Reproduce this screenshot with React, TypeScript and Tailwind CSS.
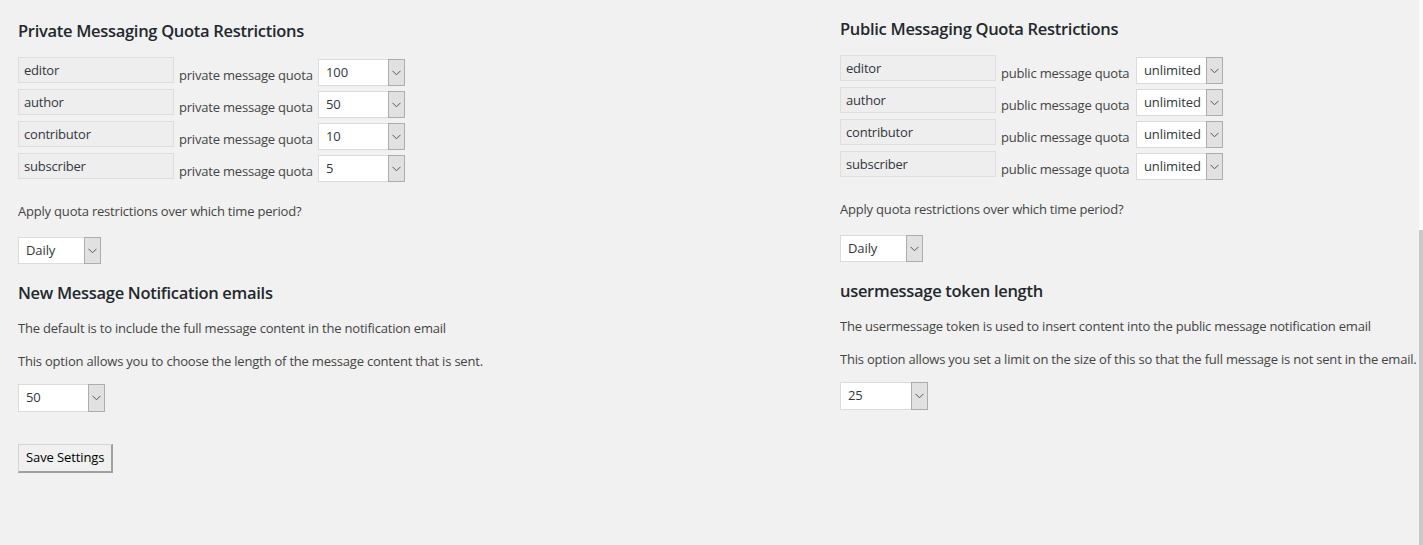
import React from "react";

const ROLES = ["editor", "author", "contributor", "subscriber"];
const PRIVATE_QUOTAS = ["100", "50", "10", "5"];

function Chevron() {
  return (
    <svg width="9" height="6" viewBox="0 0 9 6" fill="none">
      <path d="M0.5 0.8 L4.5 4.8 L8.5 0.8" stroke="#555" strokeWidth="1" />
    </svg>
  );
}

function Select({ value, width, height = "h-[27px]" }: { value: string; width: string; height?: string }) {
  return (
    <div className={`flex ${height} ${width} border border-[#dcdcdc] bg-white`}>
      <div className="flex flex-1 items-center pl-[7px] text-[13px] tracking-[-0.1px] text-[#32373c]">{value}</div>
      <div className="-my-px -mr-px flex w-[17px] items-center justify-center border border-[#adadad] bg-[#e1e1e1]">
        <Chevron />
      </div>
    </div>
  );
}

function QuotaRow({
  role,
  label,
  labelWidth,
  value,
}: {
  role: string;
  label: string;
  labelWidth: string;
  value: string;
}) {
  return (
    <div className="flex h-[32px] items-start">
      <div className="flex h-[26px] w-[156px] items-start border border-[#dedede] bg-[#eeeeee] pl-[5px] pt-[4px] text-[13px] leading-[17px] tracking-[-0.2px] text-[#32373c]">
        {role}
      </div>
      <div className={`ml-[5px] mt-[8px] ${labelWidth} whitespace-nowrap text-[13px] leading-5 tracking-[-0.2px] text-[#444]`}>
        {label}
      </div>
      <div className="ml-[5px] mt-[2px]">
        <Select value={value} width="w-[87px]" />
      </div>
    </div>
  );
}

function Column({
  title,
  label,
  labelWidth,
  values,
  heading,
  line1,
  line2,
  length,
  lengthWidth,
  children,
  className,
}: {
  title: string;
  label: string;
  labelWidth: string;
  values: string[];
  heading: string;
  line1: string;
  line2: string;
  length: string;
  lengthWidth: string;
  children?: React.ReactNode;
  className: string;
}) {
  return (
    <div className={className}>
      <h2 className="h-6 text-[16.5px] font-semibold leading-6 tracking-[-0.3px] text-[#23282d]">{title}</h2>
      <div className="mt-[14px]">
        {ROLES.map((r, i) => (
          <QuotaRow key={r} role={r} label={label} labelWidth={labelWidth} value={values[i]} />
        ))}
      </div>
      <p className="mt-[16px] text-[13px] leading-5 tracking-[-0.2px] text-[#444]">
        Apply quota restrictions over which time period?
      </p>
      <div className="mt-[16px]">
        <Select value="Daily" width="w-[83px]" />
      </div>
      <h2 className="mt-[17px] h-6 text-[16.5px] font-semibold leading-6 tracking-[-0.3px] text-[#23282d]">{heading}</h2>
      <p className="mt-[13px] whitespace-nowrap text-[13px] leading-5 tracking-[-0.2px] text-[#444]">{line1}</p>
      <p className="mt-[13px] whitespace-nowrap text-[13px] leading-5 tracking-[-0.2px] text-[#444]">{line2}</p>
      <div className="mt-[13px]">
        <Select value={length} width={lengthWidth} height="h-[28px]" />
      </div>
      {children}
    </div>
  );
}

export default function App() {
  return (
    <div
      className="relative h-[545px] w-full overflow-hidden bg-[#f1f1f1]"
      style={{ fontFamily: '"Open Sans", "Noto Sans", sans-serif' }}
    >
      <div className="flex pl-[18px]">
        <Column
          className="w-[822px] pt-[19px]"
          title="Private Messaging Quota Restrictions"
          label="private message quota"
          labelWidth="w-[134px]"
          values={PRIVATE_QUOTAS}
          heading="New Message Notification emails"
          line1="The default is to include the full message content in the notification email"
          line2="This option allows you to choose the length of the message content that is sent."
          length="50"
          lengthWidth="w-[87px]"
        >
          <button className="mt-[32px] h-[29px] border-b-2 border-l border-r-2 border-t border-[#d4d4d4] border-b-[#a0a0a0] border-r-[#a0a0a0] bg-[#f0f0f0] px-[7px] text-[13px] tracking-[-0.1px] text-black">
            Save Settings
          </button>
        </Column>
        <Column
          className="flex-1 pt-[17px]"
          title="Public Messaging Quota Restrictions"
          label="public message quota"
          labelWidth="w-[130px]"
          values={["unlimited", "unlimited", "unlimited", "unlimited"]}
          heading="usermessage token length"
          line1="The usermessage token is used to insert content into the public message notification email"
          line2="This option allows you set a limit on the size of this so that the full message is not sent in the email."
          length="25"
          lengthWidth="w-[88px]"
        />
      </div>
      <div className="absolute right-0 top-0 flex h-full w-[4px] flex-col">
        <div className="h-[230px] bg-[#fafafa]" />
        <div className="flex-1 bg-[#c8c8c8]" />
      </div>
    </div>
  );
}
